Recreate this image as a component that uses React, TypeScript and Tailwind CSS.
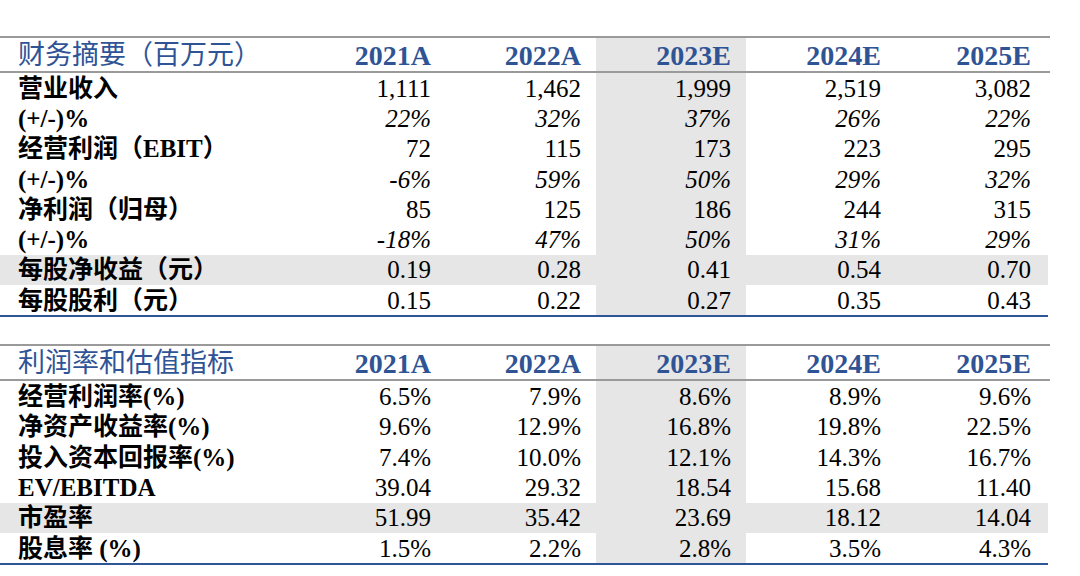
import React from "react";

type Row = {
  label: string;
  values: string[];
  italic?: boolean;
  shaded?: boolean;
};

type Table = {
  title: string;
  rows: Row[];
};

const years = ["2021A", "2022A", "2023E", "2024E", "2025E"];

const tables: Table[] = [
  {
    title: "财务摘要（百万元）",
    rows: [
      { label: "营业收入", values: ["1,111", "1,462", "1,999", "2,519", "3,082"] },
      { label: "(+/-)%", values: ["22%", "32%", "37%", "26%", "22%"], italic: true },
      { label: "经营利润（EBIT）", values: ["72", "115", "173", "223", "295"] },
      { label: "(+/-)%", values: ["-6%", "59%", "50%", "29%", "32%"], italic: true },
      { label: "净利润（归母）", values: ["85", "125", "186", "244", "315"] },
      { label: "(+/-)%", values: ["-18%", "47%", "50%", "31%", "29%"], italic: true },
      { label: "每股净收益（元）", values: ["0.19", "0.28", "0.41", "0.54", "0.70"], shaded: true },
      { label: "每股股利（元）", values: ["0.15", "0.22", "0.27", "0.35", "0.43"] },
    ],
  },
  {
    title: "利润率和估值指标",
    rows: [
      { label: "经营利润率(%)", values: ["6.5%", "7.9%", "8.6%", "8.9%", "9.6%"] },
      { label: "净资产收益率(%)", values: ["9.6%", "12.9%", "16.8%", "19.8%", "22.5%"] },
      { label: "投入资本回报率(%)", values: ["7.4%", "10.0%", "12.1%", "14.3%", "16.7%"] },
      { label: "EV/EBITDA", values: ["39.04", "29.32", "18.54", "15.68", "11.40"] },
      { label: "市盈率", values: ["51.99", "35.42", "23.69", "18.12", "14.04"], shaded: true },
      { label: "股息率 (%)", values: ["1.5%", "2.2%", "2.8%", "3.5%", "4.3%"] },
    ],
  },
];

const font = {
  fontFamily: '"Liberation Serif", "Noto Sans CJK SC", serif',
};

function FinanceTable({ table }: { table: Table }) {
  return (
    <div className="w-[1050px]">
      {/* Header */}
      <div className="grid grid-cols-[296px_repeat(5,150px)] border-t-2 border-b-2 border-[#9a9a9a] h-[37px]">
        <div className="flex items-center pl-[18px] pt-[2px] text-[27px] text-[#2f5496] leading-none">
          {table.title}
        </div>
        {years.map((y, i) => (
          <div
            key={y}
            className={`flex items-center justify-end pr-[15px] pt-[2px] text-[28px] font-bold text-[#2f5496] leading-none ${
              i === 2 ? "bg-[#e6e6e6]" : ""
            }`}
          >
            {y}
          </div>
        ))}
      </div>

      {/* Rows */}
      <div className="w-[1048px] border-b-2 border-[#2f5597]">
        {table.rows.map((row, r) => (
          <div
            key={r}
            className={`grid grid-cols-[296px_repeat(5,150px)] h-[30.3px] ${
              row.shaded ? "bg-[#e6e6e6]" : ""
            }`}
          >
            <div className="flex items-center pl-[18px] text-[25px] font-bold text-black leading-none whitespace-nowrap">
              {row.label}
            </div>
            {row.values.map((v, i) => (
              <div
                key={i}
                className={`flex items-center justify-end pr-[15px] text-[25px] text-black leading-none ${
                  row.italic ? "italic" : ""
                } ${i === 2 ? "bg-[#e6e6e6]" : ""}`}
              >
                {v}
              </div>
            ))}
          </div>
        ))}
      </div>
    </div>
  );
}

export default function App() {
  return (
    <div className="w-[1080px] h-[576px] bg-white pt-[36px] overflow-hidden" style={font}>
      <FinanceTable table={tables[0]} />
      <div className="h-[27px]" />
      <FinanceTable table={tables[1]} />
    </div>
  );
}
